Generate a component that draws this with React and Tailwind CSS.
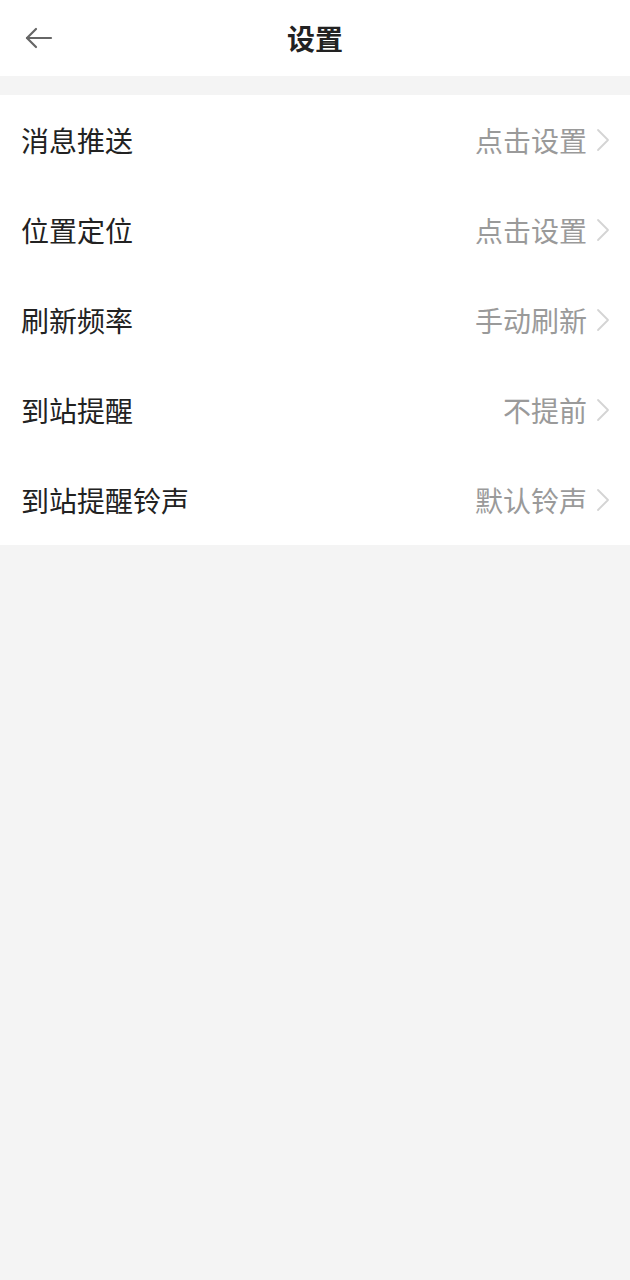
const items = [
  { label: "消息推送", value: "点击设置" },
  { label: "位置定位", value: "点击设置" },
  { label: "刷新频率", value: "手动刷新" },
  { label: "到站提醒", value: "不提前" },
  { label: "到站提醒铃声", value: "默认铃声" },
];

function BackArrow() {
  return (
    <svg width="30" height="30" viewBox="0 0 30 30" fill="none" stroke="#666" strokeWidth="2.2" strokeLinecap="round" strokeLinejoin="round">
      <path d="M27 15H3" />
      <path d="M12 6L3 15l9 9" />
    </svg>
  );
}

function Chevron() {
  return (
    <svg width="14" height="24" viewBox="0 0 14 24" fill="none" stroke="#d4d4d4" strokeWidth="1.8" strokeLinecap="round" strokeLinejoin="round">
      <path d="M2 2l10 10L2 22" />
    </svg>
  );
}

export default function App() {
  return (
    <div
      className="min-h-[1280px] bg-[#f4f4f4]"
      style={{ fontFamily: '"Noto Sans CJK SC", "Noto Sans", sans-serif' }}
    >
      <div className="h-[76px] bg-white flex items-center relative">
        <div className="pl-[24px] flex items-center">
          <BackArrow />
        </div>
        <div className="absolute left-0 right-0 text-center text-[28px] font-bold text-[#222] pointer-events-none">
          设置
        </div>
      </div>
      <div className="mt-[19px] bg-white">
        {items.map((item) => (
          <div key={item.label} className="h-[90px] flex items-center justify-between pl-[21px] pr-[20px]">
            <span className="text-[28px] text-[#222]">{item.label}</span>
            <div className="flex items-center gap-[9px]">
              <span className="text-[28px] text-[#9a9a9a]">{item.value}</span>
              <Chevron />
            </div>
          </div>
        ))}
      </div>
    </div>
  );
}
